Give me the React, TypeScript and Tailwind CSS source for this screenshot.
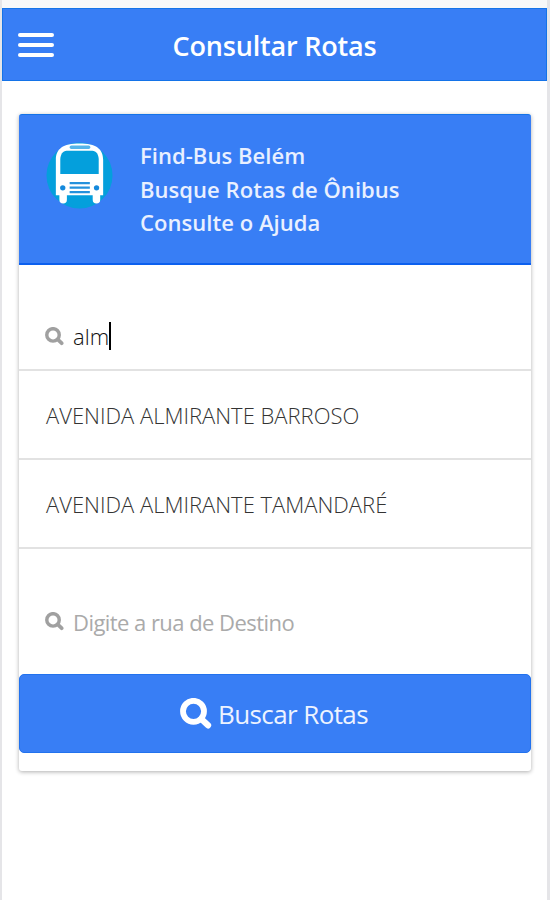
const routes = ['AVENIDA ALMIRANTE BARROSO', 'AVENIDA ALMIRANTE TAMANDARÉ'];

function SearchIcon({ className }: { className?: string }) {
  return (
    <svg viewBox="0 0 32 32" className={className} fill="none" stroke="currentColor">
      <circle cx="13.5" cy="13.3" r="10.5" strokeWidth="5.8" />
      <path d="M21.300 21 28 27.300" strokeWidth="6.300" strokeLinecap="round" />
    </svg>
  );
}

function BusIcon() {
  return (
    <svg viewBox="0 0 68 68" className="size-[67px] flex-none">
      <circle cx="34" cy="34" r="33.5" fill="#049fdc" />
      <path
        d="M10 54V18C10 7 17 1.5 34 1.5S58 7 58 18v36h-3v4.500a3.800 3.800 0 0 1-7.600 0V54H21.200v4.500a3.800 3.800 0 0 1-7.600 0V54z"
        fill="#fff"
      />
      <rect x="24" y="3.500" width="21" height="3.500" rx="1.600" fill="#55b5ea" />
      <path d="M14.500 32.500V18c0-5 2.500-9 6.500-9h26c4 0 6.500 4 6.500 9v14.500z" fill="#049fdc" />
      <circle cx="17" cy="46.500" r="2.700" fill="#1489dc" />
      <circle cx="51.300" cy="46.500" r="2.700" fill="#1489dc" />
      <path d="M24 41.800h20.500M24 46.300h20.500M24 50.800h20.500" stroke="#2491dc" strokeWidth="2.200" />
    </svg>
  );
}

function TopBar() {
  return (
    <header className="flex h-[73px] flex-none items-center justify-between border border-[#1473e8] bg-[#387ef5] px-[15px] text-white">
      <button aria-label="Menu" className="flex w-9 flex-col gap-[6px]">
        <span className="h-1 w-full rounded-full bg-white" />
        <span className="h-1 w-full rounded-full bg-white" />
        <span className="h-1 w-full rounded-full bg-white" />
      </button>
      <h1 className="pt-[2px] text-[27px] leading-none font-semibold tracking-[-0.2px] whitespace-nowrap">Consultar Rotas</h1>
      <span className="w-9" />
    </header>
  );
}

export default function App() {
  return (
    <div className="flex h-[900px] w-[550px] flex-col border-r-[3px] border-l-2 border-[#e5e5e8] bg-white font-['Open_Sans','Noto_Sans',sans-serif]">
      <div className="h-2 flex-none bg-[#f7f8f9]" />
      <TopBar />
      <main className="pt-[33px] pr-4 pl-[17px]">
        <section className="flex h-[657px] flex-col rounded-[3px] bg-white shadow-[0_1px_4px_rgba(0,0,0,0.32)]">
          <div className="flex h-[151px] flex-none gap-[27px] rounded-t-[3px] border-t border-b-2 border-t-[#1473e8] border-b-[#0c60ee] bg-[#387ef5] pt-[27px] pl-[27px]">
            <BusIcon />
            <div className="-mt-[3px] text-[22px] leading-[33.5px] font-semibold tracking-[0.05px] text-[#e9f0ff]">
              <p>Find-Bus Belém</p>
              <p>Busque Rotas de Ônibus</p>
              <p>Consulte o Ajuda</p>
            </div>
          </div>
          <label className="flex h-[106px] flex-none items-center border-b-2 border-[#e2e2e2] pt-[38px] pl-[26px]">
            <SearchIcon className="size-[19px] flex-none text-[#a0a0a0]" />
            <span className="ml-[9px] text-[22px] leading-[30px] font-light text-[#111]">alm</span>
            <span className="h-[28px] w-[2px] bg-black" />
          </label>
          <ul>
            {routes.map((route) => (
              <li
                key={route}
                className="flex h-[89px] items-center border-b-2 border-[#e2e2e2] pt-px pl-[27px] text-[22px] font-light text-[#333] whitespace-nowrap"
              >
                {route}
              </li>
            ))}
          </ul>
          <label className="flex h-[124px] flex-none items-center pt-[21px] pl-[26px]">
            <SearchIcon className="size-[19px] flex-none text-[#a0a0a0]" />
            <span className="ml-[9px] text-[22px] leading-[30px] tracking-[-0.55px] text-[#aaa]">Digite a rua de Destino</span>
          </label>
          <button className="mt-px flex h-[79px] flex-none items-center justify-center gap-[6px] rounded-[5px] border border-[#2272ee] bg-[#387ef5] pr-[2px] text-[26px] text-[#edf3ff]">
            <SearchIcon className="size-8 flex-none text-white" />
            <span className="pt-[2px] tracking-[-0.6px]">Buscar Rotas</span>
          </button>
        </section>
      </main>
    </div>
  );
}
